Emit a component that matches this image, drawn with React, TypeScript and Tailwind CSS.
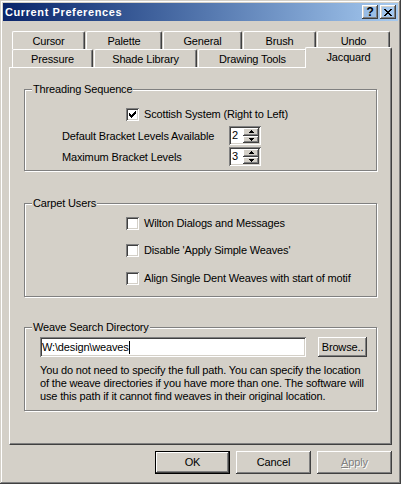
import React from "react"

const raised =
  "shadow-[inset_-1px_-1px_#404040,inset_1px_1px_#ffffff,inset_-2px_-2px_#808080,inset_2px_2px_#d4d0c8]"
const sunken =
  "shadow-[inset_1px_1px_#808080,inset_-1px_-1px_#ffffff,inset_2px_2px_#404040,inset_-2px_-2px_#d4d0c8]"
const etched = "border border-[#808080] shadow-[inset_1px_1px_#ffffff,1px_1px_#ffffff]"

function Checkbox({ checked }: { checked?: boolean }) {
  return (
    <div className={`w-[13px] h-[13px] bg-white shrink-0 flex items-center justify-center ${sunken}`}>
      {checked && (
        <svg width="7" height="7" viewBox="0 0 7 7" shapeRendering="crispEdges">
          <path
            fill="#000"
            d="M0 2h1v3H0zM1 3h1v3H1zM2 4h1v3H2zM3 3h1v3H3zM4 2h1v3H4zM5 1h1v3H5zM6 0h1v3H6z"
          />
        </svg>
      )}
    </div>
  )
}

function SpinButton({ up }: { up?: boolean }) {
  return (
    <div className={`flex-1 flex items-center justify-center bg-[#d4d0c8] ${raised}`}>
      <svg width="5" height="3" viewBox="0 0 5 3" shapeRendering="crispEdges">
        <path fill="#000" d={up ? "M2 0h1v1H2zM1 1h3v1H1zM0 2h5v1H0z" : "M0 0h5v1H0zM1 1h3v1H1zM2 2h1v1H2z"} />
      </svg>
    </div>
  )
}

function Spin({ value }: { value: string }) {
  return (
    <div className={`w-[32px] h-[19px] bg-white flex p-[2px] shrink-0 ${sunken}`}>
      <div className="flex-1 pl-[1px] leading-[15px]">{value}</div>
      <div className="w-[16px] flex flex-col">
        <SpinButton up />
        <SpinButton />
      </div>
    </div>
  )
}

function Tab({ label, className }: { label: string; className: string }) {
  return (
    <div
      className={`h-[18px] pt-[1px] shrink-0 flex items-center justify-center bg-[#d4d0c8] border-t border-l border-white border-r border-r-[#404040] rounded-t-[2px] shadow-[inset_-1px_0_#808080] ${className}`}
    >
      {label}
    </div>
  )
}

function Button({ children, className = "" }: { children: React.ReactNode; className?: string }) {
  return (
    <div className={`h-[23px] flex items-center justify-center bg-[#d4d0c8] ${raised} ${className}`}>{children}</div>
  )
}

export default function App() {
  return (
    <div className="w-[401px] h-[484px] bg-[#d4d0c8] p-[3px] flex flex-col text-[11px] leading-[13px] tracking-[-0.15px] text-black font-['Liberation_Sans',Arial,sans-serif] shadow-[inset_-1px_-1px_#404040,inset_1px_1px_#d4d0c8,inset_-2px_-2px_#808080,inset_2px_2px_#ffffff]">
      {/* title bar */}
      <div className="h-[18px] shrink-0 flex items-center pl-[2px] pr-[2px] bg-linear-to-r from-[#0a246a] to-[#a6caf0]">
        <span className="font-bold text-white flex-1 tracking-[0.6px]">Current Preferences</span>
        <div className={`w-[16px] h-[14px] flex items-center justify-center font-bold text-[12px] leading-[12px] ${raised}`}>
          ?
        </div>
        <div className={`w-[16px] h-[14px] ml-[2px] flex items-center justify-center ${raised}`}>
          <svg width="8" height="7" viewBox="0 0 8 7" shapeRendering="crispEdges">
            <path
              fill="#000"
              d="M0 0h2v1H0zM6 0h2v1H6zM1 1h2v1H1zM5 1h2v1H5zM2 2h4v1H2zM3 3h2v1H3zM2 4h4v1H2zM1 5h2v1H1zM5 5h2v1H5zM0 6h2v1H0zM6 6h2v1H6z"
            />
          </svg>
        </div>
      </div>

      <div className="flex flex-col px-[6px] pt-[10px]">
        {/* back row of tabs */}
        <div className="flex h-[18px] pl-[3px] gap-px">
          <Tab label="Cursor" className="w-[73px]" />
          <Tab label="Palette" className="w-[76px]" />
          <Tab label="General" className="w-[79px]" />
          <Tab label="Brush" className="w-[73px]" />
          <Tab label="Undo" className="w-[73px]" />
        </div>
        {/* front row of tabs */}
        <div className="flex items-end h-[18px] pl-[3px]">
          <Tab label="Pressure" className="w-[81px]" />
          <Tab label="Shade Library" className="w-[103px] ml-px" />
          <Tab label="Drawing Tools" className="w-[109px] ml-px" />
          <div className="w-[87px] h-[21px] -ml-[2px] -mb-px pb-[2px] relative z-10 shrink-0 flex items-center justify-center bg-[#d4d0c8] border-t border-l border-white border-r border-r-[#404040] rounded-t-[2px] shadow-[inset_-1px_0_#808080]">
            Jacquard
          </div>
        </div>

        {/* page */}
        <div className="h-[378px] pl-[14px] flex flex-col border-t border-l border-white border-r border-b border-r-[#404040] border-b-[#404040] shadow-[inset_-1px_-1px_#808080]">
          <div className={`mt-[21px] w-[353px] h-[82px] flex flex-col ${etched}`}>
            <span className="-mt-[7px] ml-[7px] px-[1px] w-fit bg-[#d4d0c8]">Threading Sequence</span>
            <div className="mt-[12px] ml-[101px] flex items-center gap-[5px]">
              <Checkbox checked />
              <span>Scottish System (Right to Left)</span>
            </div>
            <div className="mt-[5px] ml-[37px] flex items-center">
              <span className="w-[167px] pt-[2px]">Default Bracket Levels Available</span>
              <Spin value="2" />
            </div>
            <div className="mt-[2px] ml-[37px] flex items-center">
              <span className="w-[167px] pt-[2px]">Maximum Bracket Levels</span>
              <Spin value="3" />
            </div>
          </div>

          <div className={`mt-[32px] w-[353px] h-[94px] flex flex-col ${etched}`}>
            <span className="-mt-[7px] ml-[7px] px-[1px] w-fit bg-[#d4d0c8]">Carpet Users</span>
            <div className="mt-[7px] ml-[101px] flex items-center gap-[5px]">
              <Checkbox />
              <span>Wilton Dialogs and Messages</span>
            </div>
            <div className="mt-[14px] ml-[101px] flex items-center gap-[5px]">
              <Checkbox />
              <span>Disable 'Apply Simple Weaves'</span>
            </div>
            <div className="mt-[15px] ml-[101px] flex items-center gap-[5px]">
              <Checkbox />
              <span>Align Single Dent Weaves with start of motif</span>
            </div>
          </div>

          <div className={`mt-[30px] w-[353px] h-[84px] flex flex-col ${etched}`}>
            <span className="-mt-[7px] ml-[7px] px-[1px] w-fit bg-[#d4d0c8]">Weave Search Directory</span>
            <div className="mt-[3px] ml-[15px] flex">
              <div className={`w-[266px] h-[20px] bg-white px-[2px] flex items-center ${sunken}`}>
                <span>W:\design\weaves</span>
                <span className="w-px h-[13px] bg-black" />
              </div>
              <Button className="ml-[12px] w-[49px] !h-[20px]">Browse..</Button>
            </div>
            <p className="mt-[7px] ml-[15px] whitespace-nowrap leading-[13px]">
              You do not need to specify the full path. You can specify the location
              <br />
              of the weave directories if you have more than one. The software will
              <br />
              use this path if it cannot find weaves in their original location.
            </p>
          </div>
        </div>

        <div className="mt-[6px] flex justify-end gap-[6px]">
          <div className="w-[75px] h-[23px] border border-black">
            <Button className="!h-[21px]">OK</Button>
          </div>
          <Button className="w-[75px]">Cancel</Button>
          <Button className="w-[75px] text-[#808080] [text-shadow:1px_1px_#ffffff]">
            <span>
              <span className="underline">A</span>pply
            </span>
          </Button>
        </div>
      </div>
    </div>
  )
}
